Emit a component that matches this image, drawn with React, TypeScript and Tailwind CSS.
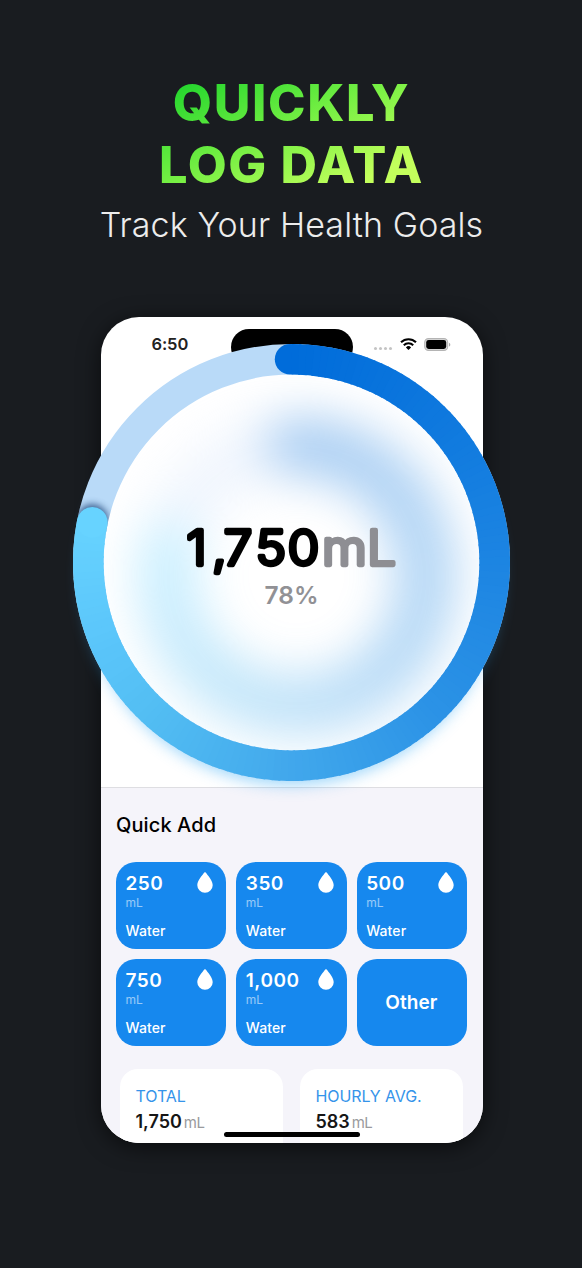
const amounts = ["250", "350", "500", "750", "1,000"];

const stops: [number, number[]][] = [
    [0, [0, 108, 218]],
    [0.25, [29, 133, 226]],
    [0.38, [44, 147, 230]],
    [0.5, [66, 168, 236]],
    [0.62, [83, 190, 243]],
    [0.68, [90, 197, 250]],
    [0.79, [104, 212, 255]],
];

const colorAt = (t: number) => {
    const i = Math.max(1, stops.findIndex(([s]) => s >= t));
    const [a, from] = stops[i - 1];
    const [b, to] = stops[i];
    const k = (t - a) / (b - a);
    return `rgb(${from.map((c, n) => Math.round(c + (to[n] - c) * k)).join(",")})`;
};

const C = 240;
const point = (deg: number, r: number) => {
    const a = (deg * Math.PI) / 180;
    return [C + r * Math.sin(a), C - r * Math.cos(a)];
};

const END = 281.4;
const STEPS = 140;

const Arc = ({ r, width }: { r: number; width: number }) => {
    const [sx, sy] = point(-0.4, r);
    const [ex, ey] = point(END, r);
    return (
        <g fill="none" strokeWidth={width}>
            <circle cx={sx} cy={sy} r={width / 2} fill={colorAt(0)} />
            {Array.from({ length: STEPS }, (_, i) => {
                const from = (i / STEPS) * END;
                const to = Math.min(END, ((i + 1) / STEPS) * END + 0.6);
                const [x1, y1] = point(from, r);
                const [x2, y2] = point(to, r);
                return <path key={i} d={`M${x1} ${y1}A${r} ${r} 0 0 1 ${x2} ${y2}`} stroke={colorAt(from / 360)} />;
            })}
            <circle cx={ex} cy={ey} r={width / 2} fill={colorAt(END / 360)} />
        </g>
    );
};

const GoalRing = () => {
    const [ex, ey] = point(END, 203.2);
    return (
        <svg className="absolute -left-[49.5px] top-[5px] h-[480px] w-[480px]" viewBox="-0.5 -0.5 480 480">
            <defs>
                <filter id="glow" x="-20%" y="-20%" width="140%" height="140%" colorInterpolationFilters="sRGB">
                    <feGaussianBlur stdDeviation="8" />
                </filter>
                <filter id="haze" x="-40%" y="-40%" width="180%" height="180%" colorInterpolationFilters="sRGB">
                    <feGaussianBlur stdDeviation="24" />
                </filter>
                <filter id="cap" x="-60%" y="-60%" width="220%" height="220%" colorInterpolationFilters="sRGB">
                    <feGaussianBlur stdDeviation="3.5" />
                </filter>
                <mask id="band" maskUnits="userSpaceOnUse" x="0" y="0" width="480" height="480">
                    <circle cx="240" cy="240" r="203.2" fill="none" stroke="white" strokeWidth="30.6" />
                </mask>
                <clipPath id="face">
                    <circle cx="240" cy="240" r="190" />
                </clipPath>
            </defs>

            <circle cx="240" cy="253" r="195" fill="none" stroke="#35aaf5" strokeWidth="28" opacity="0.5" filter="url(#glow)" />
            <circle cx="240" cy="240" r="203.2" fill="white" />
            <g clipPath="url(#face)">
                <g opacity="0.34" filter="url(#haze)" transform="translate(5 13)">
                    <circle cx="240" cy="240" r="130" fill="none" stroke="#d3e3fb" strokeWidth="58" />
                    <Arc r={130} width={58} />
                </g>
            </g>
            <circle cx="240" cy="240" r="203.2" fill="none" stroke="#b9daf8" strokeWidth="30.6" />
            <g mask="url(#band)">
                <circle cx={ex} cy={ey - 2} r="16" fill="#123a70" opacity="0.75" filter="url(#cap)" />
            </g>
            <Arc r={203.2} width={30.6} />

            <g strokeLinejoin="round" fontFamily="Inter, sans-serif">
                <g transform="scale(1.06 1)" fontSize="48" fontWeight="300" strokeWidth="4.3">
                    <text x="127.4 151.6 162.4 192.6 223" y="242.7" stroke="black">1,750</text>
                    <text x="255.4 298" y="242.7" fill="#8e8e93" stroke="#8e8e93">mL</text>
                </g>
                <text x="240" y="281.3" fontSize="24.5" fontWeight="600" fill="#919195" textAnchor="middle" textLength="54" lengthAdjust="spacingAndGlyphs">78%</text>
            </g>
        </svg>
    );
};

const StatusBar = () => (
    <div className="flex h-[54px] items-start pl-[51px] pt-[19px]">
        <p className="w-[79px] text-[16.5px] font-semibold leading-none tracking-[-0.1px] text-[#222]">6:50</p>
        <div className="-mt-[7px] h-[36px] w-[122px] rounded-full bg-black" />
        <div className="ml-[21px] mt-[11px] flex gap-[2px]">
            <span className="size-[3px] rounded-full bg-[#c4c4c4]" />
            <span className="size-[3px] rounded-full bg-[#c4c4c4]" />
            <span className="size-[3px] rounded-full bg-[#c4c4c4]" />
            <span className="size-[3px] rounded-full bg-[#c4c4c4]" />
        </div>
        <svg className="ml-[8px] mt-[2px] h-[12px] w-[17px]" viewBox="0 0 17 12">
            <g fill="none" stroke="black" strokeWidth="2.1">
                <path d="M1 4.3a10.7 10.7 0 0 1 15 0" />
                <path d="M3.8 7.2a6.7 6.7 0 0 1 9.4 0" />
            </g>
            <path d="M8.5 12 5.9 9.4a3.7 3.7 0 0 1 5.2 0Z" />
        </svg>
        <svg className="ml-[7px] mt-[1.5px] h-[13px] w-[27px]" viewBox="0 0 27 13">
            <rect x="0.7" y="0.6" width="23" height="11.8" rx="3.8" fill="#ddd" stroke="#b4b4b4" strokeWidth="1.1" />
            <rect x="2.2" y="2.1" width="20" height="8.8" rx="2.4" />
            <path d="M25 4.8q1.3.5 1.3 1.9T25 8.6Z" fill="#aaa" />
        </svg>
    </div>
);

const Drop = () => (
    <svg className="h-[21px] w-[16px]" viewBox="0 0 16 21" fill="white">
        <path d="M8 .3C8.6.3 9 .8 9.5 1.5 12.3 5.2 15.7 9.5 15.7 13.2A7.7 7.5 0 0 1 .3 13.2C.3 9.5 3.7 5.2 6.5 1.5 7 .8 7.4.3 8 .3Z" />
    </svg>
);

const StatCard = ({ label, value }: { label: string; value: string }) => (
    <div className="h-[100px] w-[163px] rounded-[18px] bg-white pl-[15.5px] pt-[19px]">
        <p className="text-[16px] leading-none tracking-[-0.1px] text-[#3594ea]">{label}</p>
        <p className="mt-[9px] flex items-baseline gap-[2px] leading-none">
            <span className="text-[18px] font-semibold leading-none text-[#161616]">{value}</span>
            <span className="text-[15px] leading-none tracking-[-0.6px] text-[#9a9a9d]">mL</span>
        </p>
    </div>
);

export default function App() {
    return (
        <main className="flex h-[1268px] w-[582px] flex-col items-center overflow-hidden bg-[#191c20] pl-[1px] pt-[72px] font-['Inter',sans-serif]">
            <h1 className="bg-[linear-gradient(155deg,#22d52d_8%,#78f044_48%,#c3ff5c_82%)] bg-clip-text text-center text-[50.5px] font-extrabold leading-[61.5px] tracking-[1.6px] text-transparent">
                QUICKLY
                <br />
                LOG DATA
            </h1>
            <p className="mt-[10px] text-[34px] font-light leading-[40px] tracking-[0.1px] text-[#ececec]">Track Your Health Goals</p>

            <div className="relative mt-[72px] h-[826px] w-[382px]">
                <div className="h-full overflow-hidden rounded-[38px] bg-white shadow-[0_4px_22px_rgba(0,0,0,0.6)]">
                    <div className="h-[471px] border-b border-[#dedee2]">
                        <StatusBar />
                    </div>
                    <section className="h-[355px] bg-[#f5f4fa] px-[15.5px] pt-[27px]">
                        <h2 className="text-[20px] font-medium leading-none tracking-[0.1px] text-black">Quick Add</h2>
                        <div className="mt-[26.5px] grid grid-cols-3 gap-x-[10px] gap-y-[10px]">
                            {amounts.map((amount) => (
                                <div key={amount} className="flex h-[87px] justify-between rounded-[20px] bg-[#1688ee] pl-[9.5px] pr-[13px] pt-[10.5px] text-white">
                                    <div className="flex flex-col pt-[2px]">
                                        <p className="text-[19px] font-semibold leading-none tracking-[0.5px]">{amount}</p>
                                        <p className="mt-[3.5px] text-[12px] leading-none text-white/55">mL</p>
                                        <p className="mt-[15px] text-[14px] font-medium leading-none tracking-[0.1px]">Water</p>
                                    </div>
                                    <Drop />
                                </div>
                            ))}
                            <div className="flex h-[87px] items-center justify-center rounded-[20px] bg-[#1688ee] pr-[1px] pt-[2px] text-[19px] font-semibold tracking-[0.1px] text-white">Other</div>
                        </div>
                        <div className="mt-[23px] flex justify-between px-[4px]">
                            <StatCard label="TOTAL" value="1,750" />
                            <StatCard label="HOURLY AVG." value="583" />
                        </div>
                    </section>
                </div>
                <div className="absolute bottom-[6.5px] left-[123px] h-[5px] w-[136px] rounded-full bg-black" />
                <GoalRing />
            </div>
        </main>
    );
}
